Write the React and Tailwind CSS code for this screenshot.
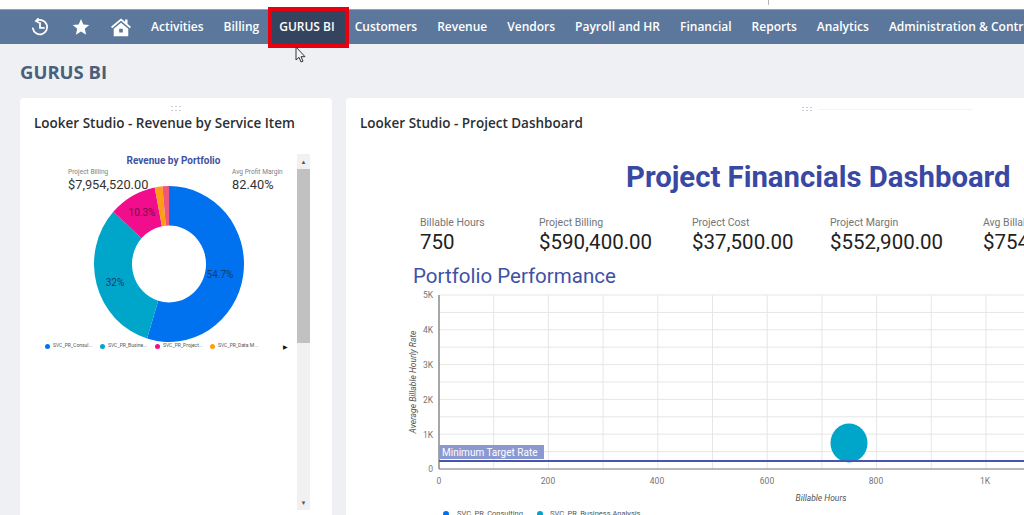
import React from 'react';

const NAV_ITEMS = ['Customers', 'Revenue', 'Vendors', 'Payroll and HR', 'Financial', 'Reports', 'Analytics', 'Administration & Controls'];

const KPIS = [
  { label: 'Billable Hours', value: '750', width: 'w-[119px]' },
  { label: 'Project Billing', value: '$590,400.00', width: 'w-[153px]' },
  { label: 'Project Cost', value: '$37,500.00', width: 'w-[138px]' },
  { label: 'Project Margin', value: '$552,900.00', width: 'w-[153px]' },
  { label: 'Avg Billable Rate', value: '$754.00', width: 'w-[120px]' },
];

const LEGEND = [
  { name: 'SVC_PR_Consul...', color: 'bg-[#0072f0]' },
  { name: 'SVC_PR_Busine...', color: 'bg-[#00a6ca]' },
  { name: 'SVC_PR_Project...', color: 'bg-[#f10d8c]' },
  { name: 'SVC_PR_Data M...', color: 'bg-[#ff9e16]' },
];

function polar(cx, cy, r, deg) {
  const a = ((deg - 90) * Math.PI) / 180;
  return [cx + r * Math.cos(a), cy + r * Math.sin(a)];
}

function slice(from, to) {
  const [cx, cy, R, r] = [76, 76, 75, 37];
  const large = to - from > 180 ? 1 : 0;
  const a = polar(cx, cy, R, from);
  const b = polar(cx, cy, R, to);
  const c = polar(cx, cy, r, to);
  const d = polar(cx, cy, r, from);
  return `M${a[0]} ${a[1]}A${R} ${R} 0 ${large} 1 ${b[0]} ${b[1]}L${c[0]} ${c[1]}A${r} ${r} 0 ${large} 0 ${d[0]} ${d[1]}Z`;
}

function Donut() {
  return (
    <svg width="152" height="158" viewBox="0 0 152 152" preserveAspectRatio="none" className="block">
      <path d={slice(0, 197)} fill="#0072f0" />
      <path d={slice(197, 312)} fill="#00a6ca" />
      <path d={slice(312, 349)} fill="#f10d8c" />
      <path d={slice(349, 355)} fill="#ff9e16" />
      <path d={slice(355, 360)} fill="#f0567c" />
      <g fontFamily="Roboto, sans-serif" fontSize="10" fill="#123a6b">
        <text x="127" y="89" textAnchor="middle">54.7%</text>
        <text x="22" y="97" textAnchor="middle">32%</text>
        <text x="49" y="30" textAnchor="middle" fill="#6b1147">10.3%</text>
      </g>
    </svg>
  );
}

function HistoryIcon() {
  return (
    <svg width="18" height="18" viewBox="0 0 20 20" fill="none" stroke="white" strokeWidth="2" strokeLinecap="round" className="shrink-0">
      <path d="M6 3.200A8 8 0 1 1 2.100 11.500" />
      <path d="M7.800 1 5.600 3.400 8.400 5" />
      <path d="M10 5.500V11H14.400" />
    </svg>
  );
}

function StarIcon() {
  return (
    <svg width="18" height="18" viewBox="0 0 20 20" fill="white" className="shrink-0 ml-[23px]">
      <path d="M10 1l2.600 6.100 6.600.6-5 4.300 1.500 6.500L10 15.100 4.300 18.500l1.500-6.500-5-4.300 6.600-.6z" />
    </svg>
  );
}

function HomeIcon() {
  return (
    <svg width="20" height="19" viewBox="0 0 22 20" fill="white" className="shrink-0 ml-[21px]">
      <path d="M11 0 15.500 3.800V1.200H18.200V6.100L22 9.300 20.700 10.800 11 2.700 1.300 10.800 0 9.300Z" />
      <path fillRule="evenodd" d="M11 4.700 19 11.300V19.500H3V11.300ZM9 11.500V15.500H13V11.500Z" />
    </svg>
  );
}

function Handle() {
  return (
    <div className="grid grid-cols-3 gap-x-[2px] gap-y-[2px]">
      {[0, 1, 2, 3, 4, 5].map((i) => (
        <span key={i} className="w-[2px] h-[1px] bg-[#c9ccd2]" />
      ))}
    </div>
  );
}

function LeftCard() {
  return (
    <div className="w-[312px] h-[440px] shrink-0 bg-white rounded-t-[4px] flex flex-col">
      <div className="flex justify-center pt-[8px] h-[14px]"><Handle /></div>
      <h2 className="pl-[14px] mt-[2px] text-[13.5px] leading-[18px] font-semibold text-[#2b2f33]">Looker Studio - Revenue by Service Item</h2>
      <div className="flex mt-[22px] font-['Roboto',sans-serif]">
        <div className="w-[277px] flex flex-col">
          <div className="text-center pl-[30px] mt-[1px] text-[10px] leading-[12px] font-bold text-[#3f51a5]">Revenue by Portfolio</div>
          <div className="flex mt-[1px] pl-[48px] relative z-10">
            <div className="w-[164px]">
              <div className="text-[6.600px] leading-[9px] text-[#808080] whitespace-nowrap">Project Billing</div>
              <div className="text-[12.800px] leading-[16px] text-[#333333] whitespace-nowrap">$7,954,520.00</div>
            </div>
            <div>
              <div className="text-[6.600px] leading-[9px] text-[#808080] whitespace-nowrap">Avg Profit Margin</div>
              <div className="text-[12.800px] leading-[16px] text-[#333333] whitespace-nowrap">82.40%</div>
            </div>
          </div>
          <div className="ml-[73px] -mt-[8px]"><Donut /></div>
          <div className="flex items-center ml-[25px] h-[10px] -mt-[2px]">
            {LEGEND.map((item) => (
              <div key={item.name} className="flex items-center w-[55px] gap-[3px]">
                <span className={`w-[5px] h-[5px] rounded-full shrink-0 ${item.color}`} />
                <span className="text-[5px] whitespace-nowrap text-[#555555]">{item.name}</span>
              </div>
            ))}
            <span className="text-[6px] text-[#111111] ml-[18px]">▶</span>
          </div>
        </div>
        <div className="w-[13px] h-[356px] bg-[#f1f1f1] flex flex-col items-center">
          <span className="text-[6px] leading-[15px] text-[#555555]">▲</span>
          <div className="w-full h-[174px] bg-[#c1c1c1]" />
          <span className="text-[6px] leading-[15px] text-[#555555] mt-auto">▼</span>
        </div>
      </div>
    </div>
  );
}

function Chart() {
  const vertical = [0, 1, 2, 3, 4, 5, 6, 7, 8, 9, 10, 11];
  const horizontal = [295, 312.4, 329.8, 347.2, 364.6, 382, 399.4, 416.8, 434.2, 451.6];
  const xLabels = [[439, '0'], [548, '200'], [657, '400'], [767, '600'], [876, '800'], [985, '1K']];
  const yLabels = [[295, '5K'], [330, '4K'], [365, '3K'], [400, '2K'], [435, '1K'], [469, '0']];
  return (
    <svg width="678" height="227" viewBox="346 288 678 227" className="block" fontFamily="Roboto, sans-serif">
      {horizontal.map((y) => (
        <line key={y} x1="439" x2="1024" y1={y} y2={y} stroke="#e6e6e6" strokeWidth="1" />
      ))}
      {vertical.map((i) => (
        <line key={i} x1={439 + i * 54.7} x2={439 + i * 54.7} y1="295" y2="469" stroke="#e6e6e6" strokeWidth="1" />
      ))}
      <line x1="439" x2="439" y1="295" y2="469" stroke="#757575" strokeWidth="1.200" />
      <line x1="439" x2="1024" y1="469" y2="469" stroke="#757575" strokeWidth="1.200" />
      {yLabels.map(([y, t]) => (
        <text key={t} x="433" y={y + 3} textAnchor="end" fontSize="8.500" fill="#757575">{t}</text>
      ))}
      {xLabels.map(([x, t]) => (
        <text key={t} x={x} y="484" textAnchor="middle" fontSize="8.500" fill="#757575">{t}</text>
      ))}
      <text transform="translate(416 382) rotate(-90)" textAnchor="middle" fontSize="8.500" fontStyle="italic" fill="#555555">Average Billable Hourly Rate</text>
      <text x="821" y="501" textAnchor="middle" fontSize="8.500" fontStyle="italic" fill="#555555">Billable Hours</text>
      <ellipse cx="849" cy="443" rx="18.500" ry="19.500" fill="#00a6ca" />
      <line x1="439" x2="1024" y1="461" y2="461" stroke="#4557ad" strokeWidth="2" />
      <rect x="439" y="445" width="105" height="14" fill="#8c98d2" />
      <text x="442" y="456" fontSize="10" fill="white">Minimum Target Rate</text>
      <circle cx="446" cy="514" r="3" fill="#0072f0" />
      <text x="457" y="516" fontSize="7.500" fill="#555555">SVC_PR_Consulting</text>
      <circle cx="540" cy="514" r="3" fill="#00a6ca" />
      <text x="550" y="516" fontSize="7.500" fill="#555555">SVC_PR_Business Analysis</text>
    </svg>
  );
}

function RightCard() {
  return (
    <div className="flex-1 min-w-0 h-[440px] bg-white rounded-tl-[4px] flex flex-col overflow-hidden">
      <div className="flex items-center pt-[8px] h-[14px] pl-[456px]">
        <Handle />
        <div className="ml-[6px] w-[155px] h-px bg-[#f3f4f6]" />
      </div>
      <h2 className="pl-[14px] mt-[2px] text-[13.5px] leading-[18px] font-semibold text-[#2b2f33]">Looker Studio - Project Dashboard</h2>
      <div className="font-['Roboto',sans-serif]">
        <h1 className="mt-[27px] pl-[280px] whitespace-nowrap text-[29.300px] leading-[36px] font-bold text-[#3949a3]">Project Financials Dashboard</h1>
        <div className="flex mt-[21px] pl-[74px] w-[800px]">
          {KPIS.map((kpi) => (
            <div key={kpi.label} className={`${kpi.width} shrink-0`}>
              <div className="text-[10.5px] leading-[13px] text-[#757575] whitespace-nowrap">{kpi.label}</div>
              <div className="text-[20.5px] leading-[26px] text-[#212121] whitespace-nowrap">{kpi.value}</div>
            </div>
          ))}
        </div>
        <div className="pl-[67px] mt-[9px] text-[20.5px] leading-[24px] text-[#3f51a5]">Portfolio Performance</div>
        <Chart />
      </div>
    </div>
  );
}

export default function App() {
  return (
    <div className="relative w-[1024px] h-[515px] overflow-hidden bg-[#eef0f4] font-['Open_Sans',sans-serif]">
      <div className="h-[9px] bg-white" />
      <span className="absolute left-[768px] top-0 w-px h-[5px] bg-[#b5b5b5]" />
      <nav className="h-[35px] bg-[#5b779c] border-t border-[#8fa3bd] flex items-center pl-[31px] whitespace-nowrap text-[12px] font-semibold text-white">
        <HistoryIcon />
        <StarIcon />
        <HomeIcon />
        <div className="flex items-center gap-[20px] ml-[20px]">
          <a>Activities</a>
          <a>Billing</a>
          <a className="h-[41px] -mx-[11px] pl-[7px] pr-[10px] flex items-center border-[4px] border-[#e8000f] bg-[#34445e]">GURUS BI</a>
          {NAV_ITEMS.map((item) => (
            <a key={item} className={item === 'Customers' ? '-ml-[3px]' : ''}>{item}</a>
          ))}
        </div>
      </nav>
      <h1 className="pl-[20px] mt-[16px] text-[18.500px] leading-[24px] font-bold text-[#4a5f7a]">GURUS BI</h1>
      <div className="flex gap-[14px] pl-[20px] mt-[14px]">
        <LeftCard />
        <RightCard />
      </div>
      <svg className="absolute left-[295px] top-[46px]" width="12" height="18" viewBox="0 0 12 18" fill="#f4f4f4" stroke="#333333" strokeWidth="1">
        <path d="M1 1V14L4 11.300 6 16 8 15.200 6 10.700H10Z" />
      </svg>
    </div>
  );
}
